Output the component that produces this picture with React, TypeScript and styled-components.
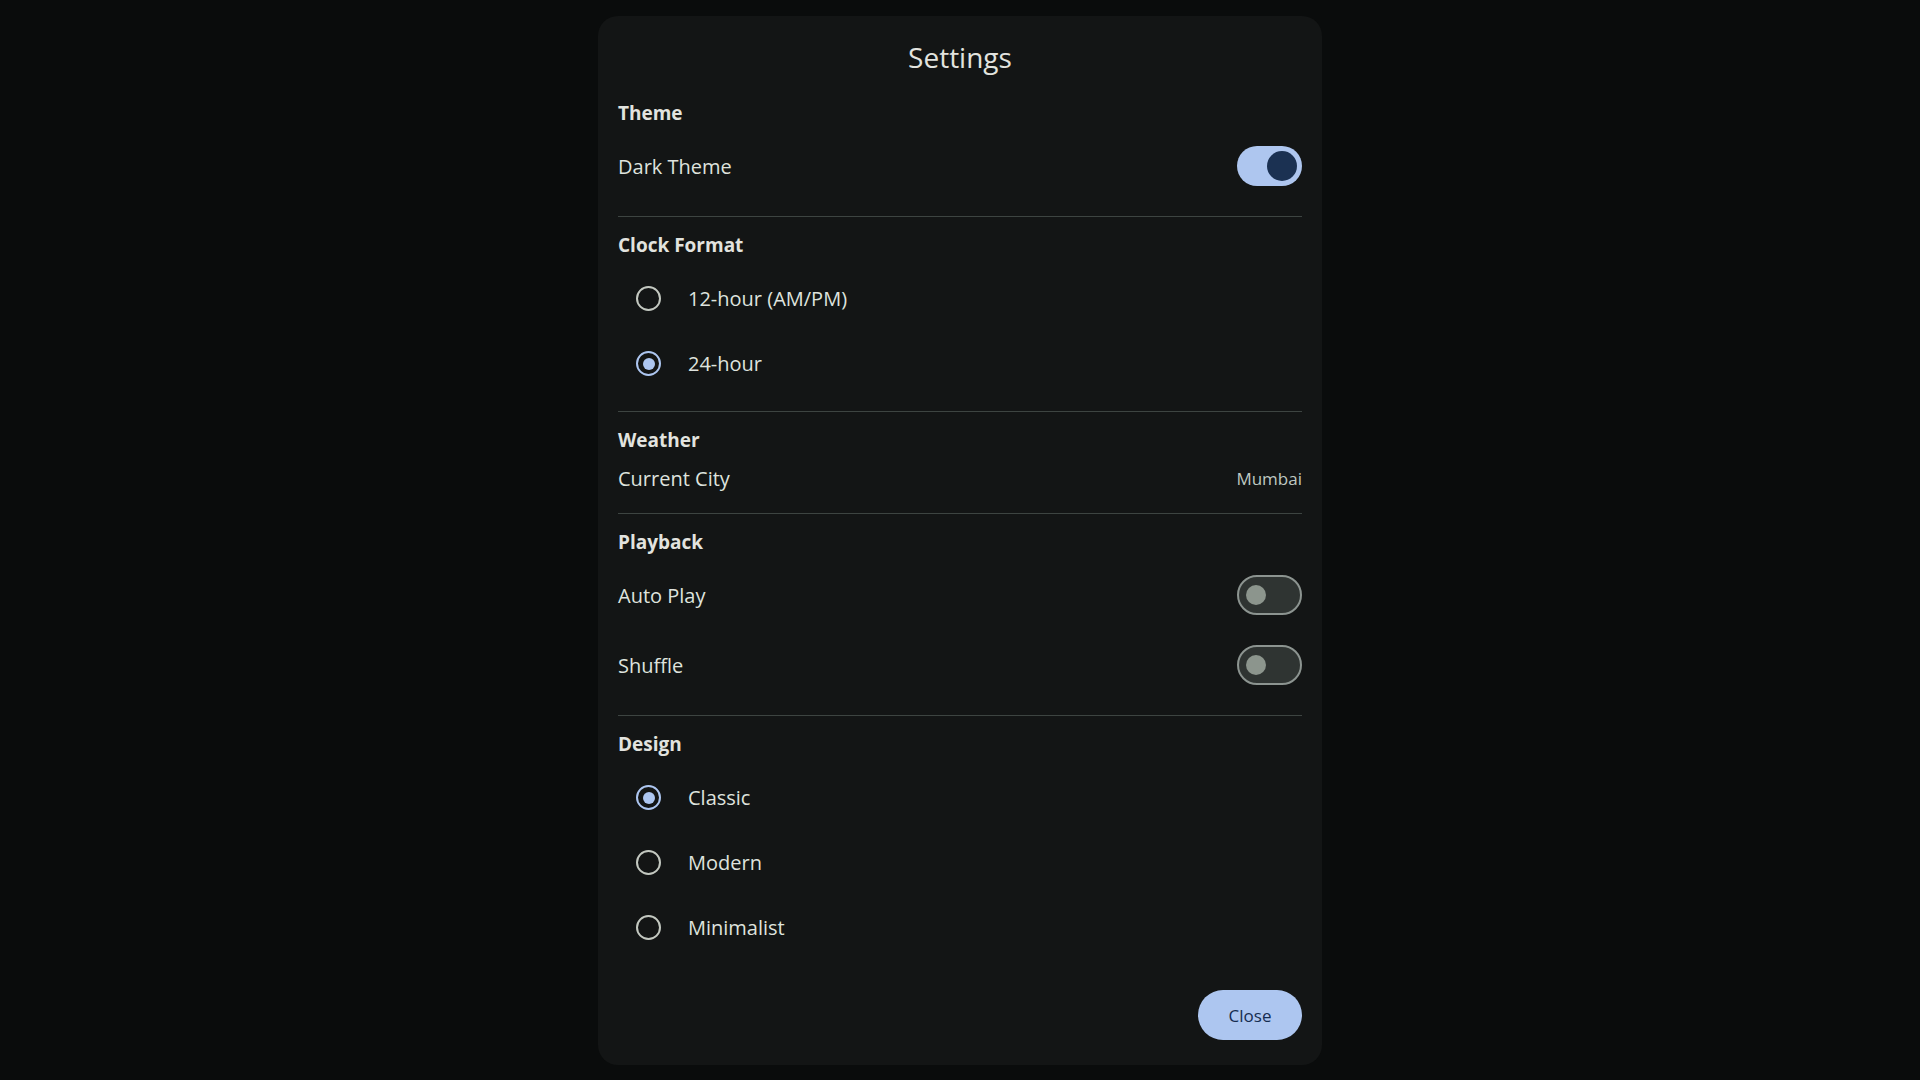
import styled, { createGlobalStyle } from "styled-components";

const GlobalStyle = createGlobalStyle`
  html, body {
    margin: 0;
    padding: 0;
    background: #0a0c0c;
    font-family: "Open Sans", "Noto Sans", sans-serif;
  }
  * {
    box-sizing: border-box;
  }
`;

const Page = styled.div`
  width: 1920px;
  height: 1080px;
  display: flex;
  justify-content: center;
  align-items: flex-start;
  padding-top: 16px;
`;

const Dialog = styled.div`
  width: 724px;
  background: #131515;
  border-radius: 20px;
  padding: 23px 20px 25px;
  display: flex;
  flex-direction: column;
  color: #e1e3df;
`;

const Title = styled.h1`
  margin: 0;
  font-size: 28px;
  line-height: 36px;
  font-weight: 400;
  text-align: center;
  color: #e2e3df;
`;

const Section = styled.section<{ $last?: boolean }>`
  padding: ${({ $last }) => ($last ? "14px 0 0" : "14px 0 15px")};
  border-bottom: ${({ $last }) => ($last ? "none" : "1px solid #3d4441")};
  &:first-of-type {
    padding-top: 24px;
  }
`;

const SectionTitle = styled.h2`
  margin: 0 0 4px;
  font-size: 19px;
  line-height: 28px;
  font-weight: 700;
  color: #e2e3df;
`;

const Row = styled.div<{ $height: number }>`
  height: ${({ $height }) => $height}px;
  display: flex;
  align-items: center;
  justify-content: space-between;
`;

const Label = styled.span`
  font-size: 20px;
  color: #dfe3de;
`;

const Value = styled.span`
  font-size: 17px;
  color: #bfc8c1;
`;

const SwitchTrack = styled.div<{ $on: boolean }>`
  width: 65px;
  height: 40px;
  border-radius: 20px;
  display: flex;
  align-items: center;
  justify-content: ${({ $on }) => ($on ? "flex-end" : "flex-start")};
  padding: ${({ $on }) => ($on ? "0 5px" : "0 7px")};
  background: ${({ $on }) => ($on ? "#aec6ef" : "#2f3432")};
  border: ${({ $on }) => ($on ? "none" : "2.5px solid #8c9490")};
`;

const SwitchThumb = styled.div<{ $on: boolean }>`
  width: ${({ $on }) => ($on ? 30 : 20)}px;
  height: ${({ $on }) => ($on ? 30 : 20)}px;
  border-radius: 50%;
  background: ${({ $on }) => ($on ? "#1b3152" : "#8c958d")};
`;

const RadioList = styled.div`
  padding-top: 3px;
`;

const RadioRow = styled.label`
  height: 65px;
  display: flex;
  align-items: center;
  gap: 27px;
  padding-left: 18px;
  cursor: pointer;
`;

const RadioCircle = styled.span<{ $checked: boolean }>`
  width: 25px;
  height: 25px;
  border-radius: 50%;
  border: 2.5px solid ${({ $checked }) => ($checked ? "#adc6f0" : "#c3c8c0")};
  display: flex;
  align-items: center;
  justify-content: center;
  &::after {
    content: "";
    width: 12px;
    height: 12px;
    border-radius: 50%;
    background: ${({ $checked }) => ($checked ? "#adc6f0" : "transparent")};
  }
`;

const Footer = styled.div`
  display: flex;
  justify-content: flex-end;
  padding-top: 30px;
`;

const CloseButton = styled.button`
  width: 104px;
  height: 50px;
  border: none;
  border-radius: 25px;
  background: #adc6f0;
  color: #152d50;
  font-family: "Open Sans", "Noto Sans", sans-serif;
  font-size: 17px;
  font-weight: 500;
  cursor: pointer;
`;

function Switch({ on }: { on: boolean }) {
  return (
    <SwitchTrack $on={on}>
      <SwitchThumb $on={on} />
    </SwitchTrack>
  );
}

function RadioGroup({ options, selected }: { options: string[]; selected: string }) {
  return (
    <RadioList>
      {options.map((option) => (
        <RadioRow key={option}>
          <RadioCircle $checked={option === selected} />
          <Label>{option}</Label>
        </RadioRow>
      ))}
    </RadioList>
  );
}

export default function App() {
  return (
    <>
      <GlobalStyle />
      <Page>
        <Dialog>
          <Title>Settings</Title>
          <Section>
            <SectionTitle>Theme</SectionTitle>
            <Row $height={70}>
              <Label>Dark Theme</Label>
              <Switch on />
            </Row>
          </Section>
          <Section>
            <SectionTitle>Clock Format</SectionTitle>
            <RadioGroup options={["12-hour (AM/PM)", "24-hour"]} selected="24-hour" />
          </Section>
          <Section>
            <SectionTitle>Weather</SectionTitle>
            <Row $height={40}>
              <Label>Current City</Label>
              <Value>Mumbai</Value>
            </Row>
          </Section>
          <Section>
            <SectionTitle>Playback</SectionTitle>
            <Row $height={70}>
              <Label>Auto Play</Label>
              <Switch on={false} />
            </Row>
            <Row $height={70}>
              <Label>Shuffle</Label>
              <Switch on={false} />
            </Row>
          </Section>
          <Section $last>
            <SectionTitle>Design</SectionTitle>
            <RadioGroup options={["Classic", "Modern", "Minimalist"]} selected="Classic" />
          </Section>
          <Footer>
            <CloseButton>Close</CloseButton>
          </Footer>
        </Dialog>
      </Page>
    </>
  );
}
